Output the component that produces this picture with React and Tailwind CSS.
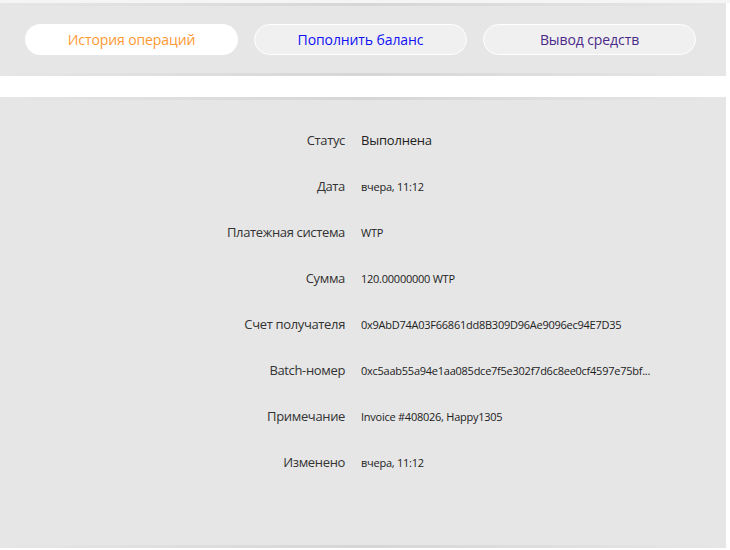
import React from "react";

const rows = [
  { label: "Статус", value: "Выполнена", big: true },
  { label: "Дата", value: "вчера, 11:12" },
  { label: "Платежная система", value: "WTP" },
  { label: "Сумма", value: "120.00000000 WTP" },
  { label: "Счет получателя", value: "0x9AbD74A03F66861dd8B309D96Ae9096ec94E7D35" },
  { label: "Batch-номер", value: "0xc5aab55a94e1aa085dce7f5e302f7d6c8ee0cf4597e75bf..." },
  { label: "Примечание", value: "Invoice #408026, Happy1305" },
  { label: "Изменено", value: "вчера, 11:12" },
];

function Shade() {
  return <div className="h-[3px] w-full bg-gradient-to-r from-transparent via-[#d6d6d6] to-transparent" />;
}

export default function App() {
  return (
    <div
      className="w-[730px] h-[550px] bg-white overflow-hidden"
      style={{ fontFamily: '"Open Sans", "Noto Sans", sans-serif' }}
    >
      <div className="h-[3px] bg-[#f5f5f5]" />
      <div className="w-[726px] h-[73px] bg-[#e6e6e6] flex flex-col justify-between">
        <Shade />
        <div className="flex gap-4 px-[25px]">
          <button className="w-[213px] h-[31px] rounded-full bg-white text-[14px] tracking-[-0.1px] text-[#ff9933]">
            История операций
          </button>
          <button className="w-[213px] h-[31px] rounded-full bg-[#f0f0f0] border border-white text-[14px] tracking-[-0.1px] text-[#1010f5]">
            Пополнить баланс
          </button>
          <button className="w-[213px] h-[31px] rounded-full bg-[#f0f0f0] border border-white text-[14px] tracking-[-0.1px] text-[#4a2a88]">
            Вывод средств
          </button>
        </div>
        <Shade />
      </div>
      <div className="h-[21px]" />
      <div className="w-[726px] h-[451px] bg-[#e6e6e6] flex flex-col">
        <Shade />
        <div className="pt-[18px]">
          {rows.map((r) => (
            <div key={r.label} className="flex items-center h-[46px]">
              <div className="w-[345px] text-right text-[13px] text-[#333] tracking-[-0.35px]">{r.label}</div>
              <div
                className={
                  "ml-[16px] text-[#222] " +
                  (r.big ? "text-[13px] tracking-[-0.2px]" : "text-[11px] tracking-[-0.25px]")
                }
              >
                {r.value}
              </div>
            </div>
          ))}
        </div>
        <div className="flex-1" />
        <Shade />
      </div>
    </div>
  );
}
